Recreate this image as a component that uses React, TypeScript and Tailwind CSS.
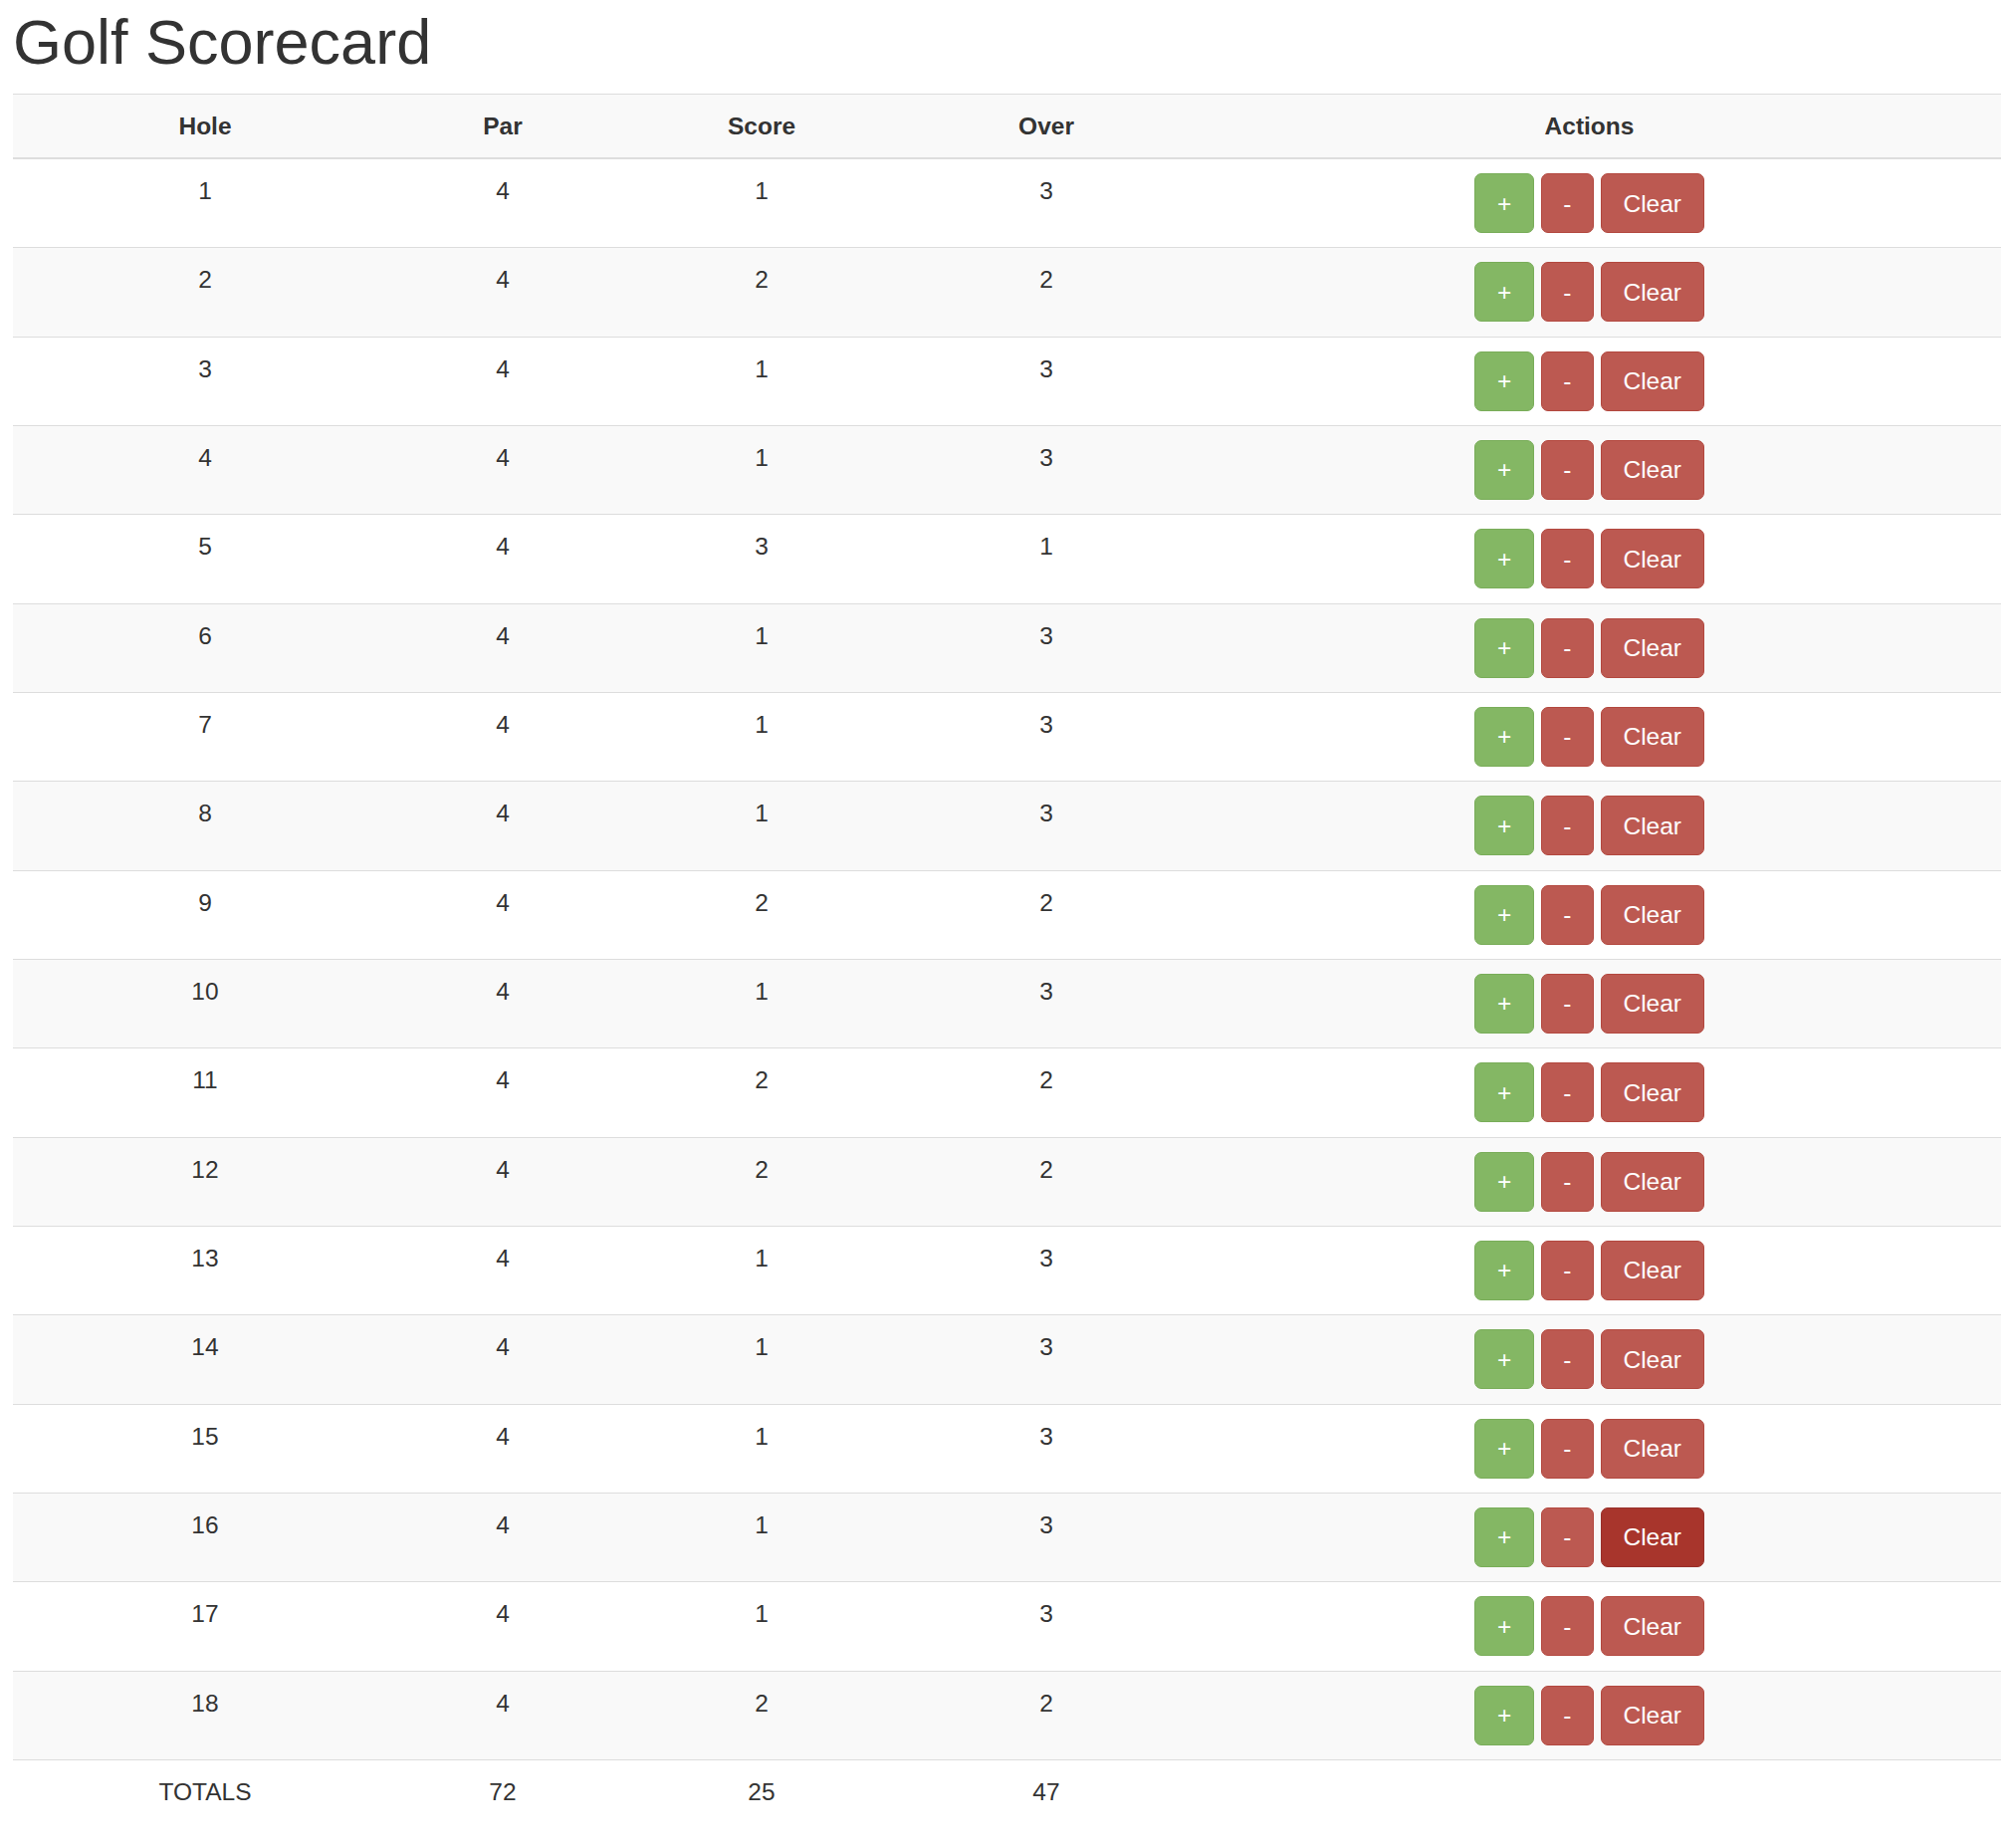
import { useState } from "react";

interface Hole {
  hole: number;
  par: number;
  score: number;
}

const initialScores = [1, 2, 1, 1, 3, 1, 1, 1, 2, 1, 2, 2, 1, 1, 1, 1, 1, 2];

const btnBase =
  "h-[60px] px-[21.5px] rounded-[7px] border text-white text-[24.5px] leading-[35px] font-normal";

const App = () => {
  const [holes, setHoles] = useState<Hole[]>(
    initialScores.map((score, i) => ({ hole: i + 1, par: 4, score }))
  );

  const update = (idx: number, fn: (s: number) => number) =>
    setHoles((prev) => prev.map((h, i) => (i === idx ? { ...h, score: Math.max(0, fn(h.score)) } : h)));

  const totalPar = holes.reduce((a, h) => a + h.par, 0);
  const totalScore = holes.reduce((a, h) => a + h.score, 0);
  const totalOver = holes.reduce((a, h) => a + (h.par - h.score), 0);

  return (
    <div className="min-h-[1856px] bg-white pl-[13px] text-[#333] font-['Liberation_Sans',Arial,sans-serif]">
      <h1 className="mt-[8px] mb-[17px] text-[63px] leading-[69px] font-normal">Golf Scorecard</h1>

      <table className="w-full table-fixed border-separate border-spacing-0 text-[24.5px] leading-[35px] text-center">
        <colgroup>
          <col className="w-[386px]" />
          <col className="w-[212px]" />
          <col className="w-[308px]" />
          <col className="w-[264px]" />
          <col />
        </colgroup>
        <thead>
          <tr className="bg-[#f9f9f9]">
            {["Hole", "Par", "Score", "Over", "Actions"].map((t) => (
              <th
                key={t}
                className="border-t border-b-2 border-[#dddddd] py-[14px] font-bold align-bottom"
              >
                {t}
              </th>
            ))}
          </tr>
        </thead>
        <tbody>
          {holes.map((h, i) => {
            const cell = "align-top pt-[14px] pb-[14.33px] border-b border-[#dddddd]";
            return (
              <tr key={h.hole} className={i % 2 === 1 ? "bg-[#f9f9f9]" : "bg-white"}>
                <td className={cell}>{h.hole}</td>
                <td className={cell}>{h.par}</td>
                <td className={cell}>{h.score}</td>
                <td className={cell}>{h.par - h.score}</td>
                <td className={cell}>
                  <div className="flex justify-center gap-[7px]">
                    <button
                      className={`${btnBase} bg-[#84b764] border-[#79ad59]`}
                      onClick={() => update(i, (s) => s + 1)}
                    >
                      +
                    </button>
                    <button
                      className={`${btnBase} bg-[#bc5951] border-[#b3483f]`}
                      onClick={() => update(i, (s) => s - 1)}
                    >
                      -
                    </button>
                    <button
                      className={`${btnBase} ${
                        h.hole === 16 ? "bg-[#a8352c] border-[#98302a]" : "bg-[#bc5951] border-[#b3483f]"
                      }`}
                      onClick={() => update(i, () => 0)}
                    >
                      Clear
                    </button>
                  </div>
                </td>
              </tr>
            );
          })}
        </tbody>
        <tfoot>
          <tr>
            <td className="align-top py-[14px]">TOTALS</td>
            <td className="align-top py-[14px]">{totalPar}</td>
            <td className="align-top py-[14px]">{totalScore}</td>
            <td className="align-top py-[14px]">{totalOver}</td>
            <td className="align-top py-[14px]"></td>
          </tr>
        </tfoot>
      </table>
    </div>
  );
};

export default App;
